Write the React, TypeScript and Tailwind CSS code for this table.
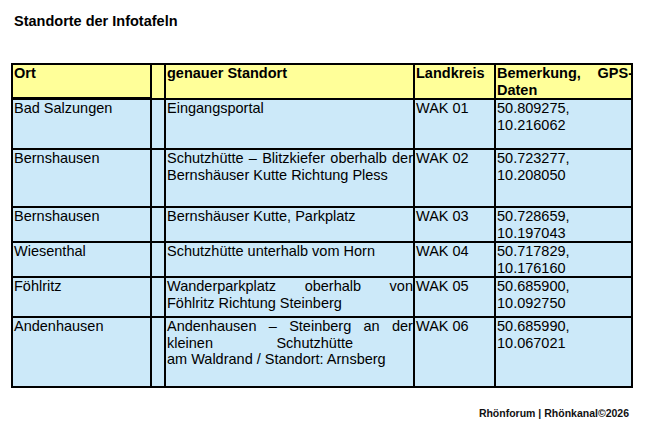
import React from 'react';

type Row = {
  ort: string;
  standort: (string | string[])[];
  kreis: string;
  gps: string[];
  h: string;
};

const rows: Row[] = [
  { ort: 'Bad Salzungen', standort: ['Eingangsportal'], kreis: 'WAK 01', gps: ['50.809275,', '10.216062'], h: 'h-[48px]' },
  {
    ort: 'Bernshausen',
    standort: [['Schutzhütte', '–', 'Blitzkiefer', 'oberhalb', 'der'], 'Bernshäuser Kutte Richtung Pless'],
    kreis: 'WAK 02',
    gps: ['50.723277,', '10.208050'],
    h: 'h-[56px]',
  },
  { ort: 'Bernshausen', standort: ['Bernshäuser Kutte, Parkplatz'], kreis: 'WAK 03', gps: ['50.728659,', '10.197043'], h: 'h-[33px]' },
  { ort: 'Wiesenthal', standort: ['Schutzhütte unterhalb vom Horn'], kreis: 'WAK 04', gps: ['50.717829,', '10.176160'], h: 'h-[33px]' },
  {
    ort: 'Föhlritz',
    standort: [['Wanderparkplatz', 'oberhalb', 'von'], 'Föhlritz Richtung Steinberg'],
    kreis: 'WAK 05',
    gps: ['50.685900,', '10.092750'],
    h: 'h-[38px]',
  },
  {
    ort: 'Andenhausen',
    standort: [['Andenhausen', '–', 'Steinberg', 'an', 'der'], ['kleinen', 'Schutzhütte', ''], 'am Waldrand / Standort: Arnsberg'],
    kreis: 'WAK 06',
    gps: ['50.685990,', '10.067021'],
    h: 'h-[68px]',
  },
];

// justified line: words spread over the cell width
function Line({ line }: { line: string | string[] }) {
  if (typeof line === 'string') return <div className="whitespace-nowrap">{line}</div>;
  // a trailing '' marks a line that stops short of the right edge
  const short = line[line.length - 1] === '';
  const words = short ? line.slice(0, -1) : line;
  return (
    <div className={`flex justify-between whitespace-nowrap ${short ? 'w-[186px]' : ''}`}>
      {words.map((w, i) => (
        <span key={i}>{w}</span>
      ))}
    </div>
  );
}

export default function App() {
  const head = 'bg-[#ffff99] pl-[1px] font-bold overflow-visible';
  const body = 'bg-[#cce9f9] pl-[1px] overflow-visible';

  return (
    <div className="w-[646px] h-[431px] bg-white text-black font-['Liberation_Sans',Arial,sans-serif] overflow-hidden">
      <div className="pt-[13px] pl-[14px] text-[14.5px] leading-[17px] font-bold">Standorte der Infotafeln</div>

      <div className="mt-[33px] ml-[11px] w-fit bg-black p-[2px] grid grid-cols-[137px_12px_247px_79px_135px] gap-[2px] text-[14.5px] leading-[16.5px]">
        <div className={`${head} h-[32px]`}>Ort</div>
        <div className={head}></div>
        <div className={head}>genauer Standort</div>
        <div className={head}>Landkreis</div>
        <div className={head}>
          <div className="flex justify-between">
            <span>Bemerkung,</span>
            <span className="-mr-[2px]">GPS-</span>
          </div>
          <div>Daten</div>
        </div>

        {rows.map((r, i) => (
          <React.Fragment key={i}>
            <div className={`${body} ${r.h}`}>{r.ort}</div>
            <div className={body}></div>
            <div className={body}>
              {r.standort.map((l, j) => (
                <Line key={j} line={l} />
              ))}
            </div>
            <div className={body}>{r.kreis}</div>
            <div className={body}>
              {r.gps.map((g, j) => (
                <div key={j}>{g}</div>
              ))}
            </div>
          </React.Fragment>
        ))}
      </div>

      <div className="mt-[19px] pr-[17px] text-right text-[10.5px] leading-[12px] font-bold text-[#111]">
        Rhönforum | Rhönkanal©2026
      </div>
    </div>
  );
}
